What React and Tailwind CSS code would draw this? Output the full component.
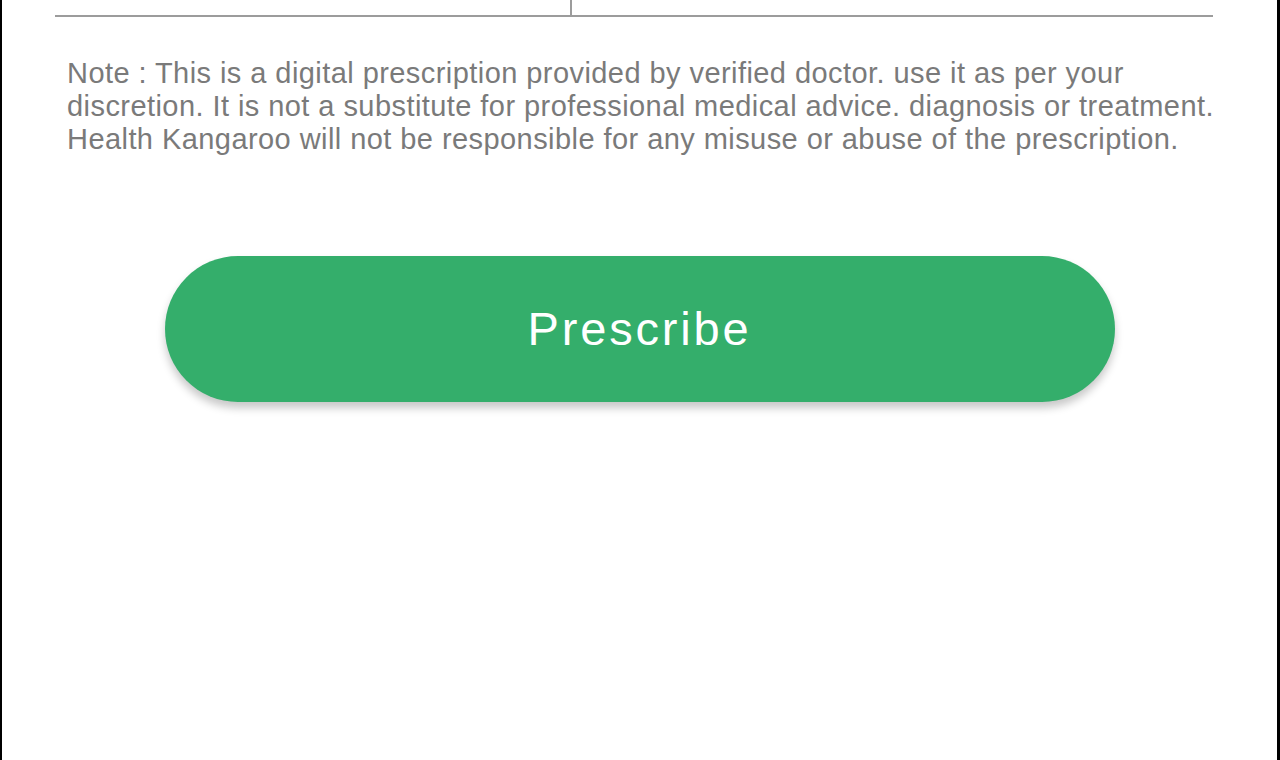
import React from 'react';

const App = () => {
  const noteLines = [
    'Note : This is a digital prescription provided by verified doctor. use it as per your',
    'discretion. It is not a substitute for professional medical advice. diagnosis or treatment.',
    'Health Kangaroo will not be responsible for any misuse or abuse of the prescription.',
  ];

  return (
    <div className="h-[760px] w-full bg-white border-l-2 border-r-[3px] border-black font-['Liberation_Sans',Arial,sans-serif] overflow-hidden">
      {/* end of table */}
      <div className="ml-[53px] mr-[64px] flex h-[17px] border-b-2 border-[#9c9c9c]">
        <div className="w-[517px] border-r-2 border-[#9c9c9c]"></div>
        <div className="flex-1"></div>
      </div>

      {/* note */}
      <div className="mt-[40px] ml-[65px] text-[29px] leading-[33px] tracking-[0.015em] text-[#7a7a7a]">
        {noteLines.map((line) => (
          <p key={line} className="whitespace-nowrap">{line}</p>
        ))}
      </div>

      {/* action */}
      <div className="mt-[100px] flex justify-center">
        <button className="w-[950px] h-[146px] rounded-full bg-[#34ae6b] text-white text-[47px] tracking-[0.06em] shadow-[0_6px_8px_rgba(0,0,0,0.22)]">
          Prescribe
        </button>
      </div>
    </div>
  );
};

export default App;
